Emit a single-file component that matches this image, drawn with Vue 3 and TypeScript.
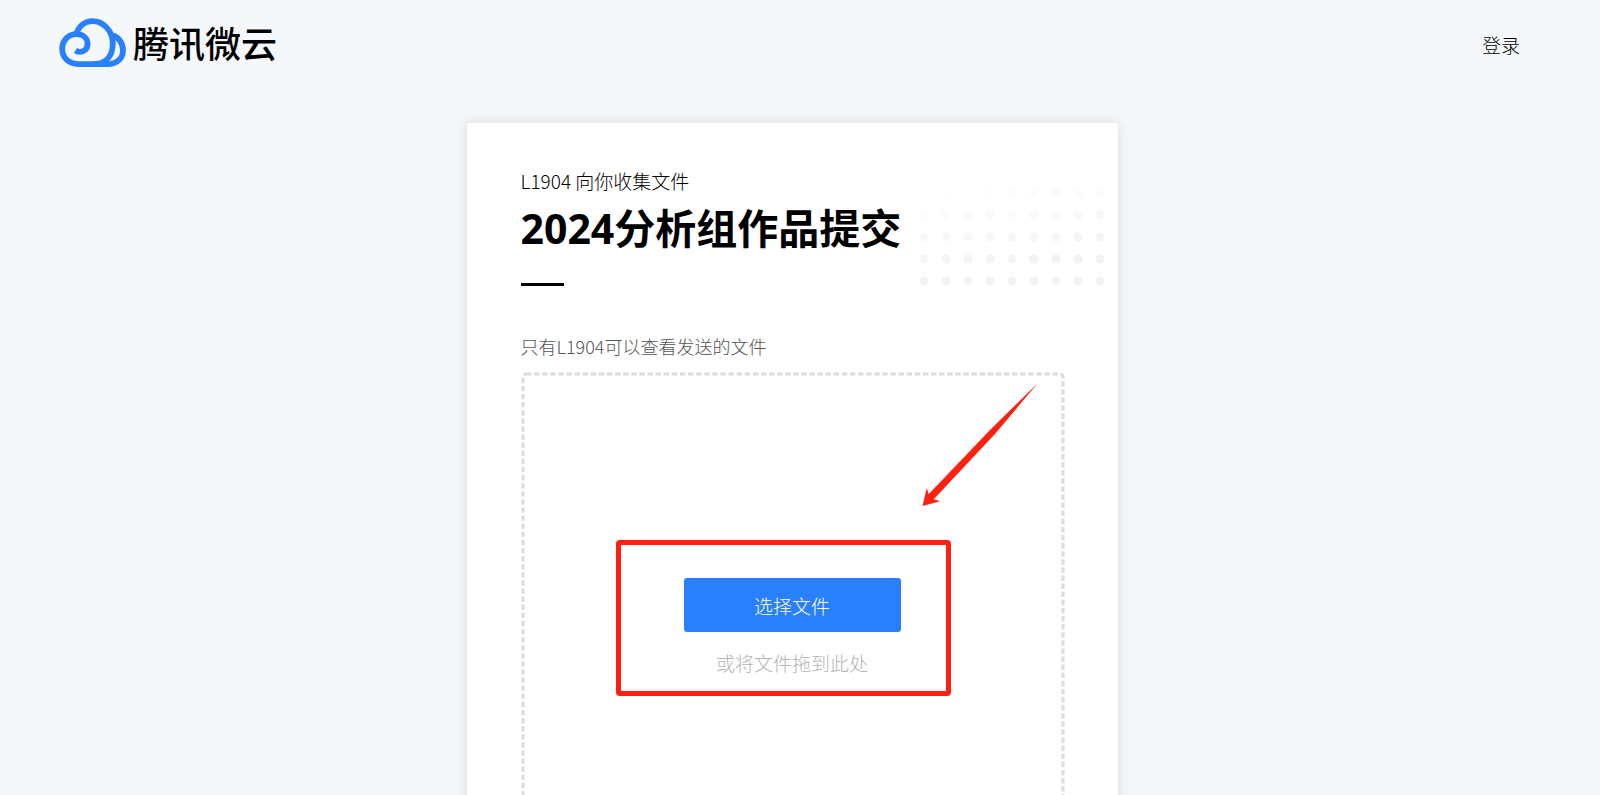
<script setup lang="ts">
interface Dot {
  x: number
  y: number
  opacity: number
}

const dots: Dot[] = []
for (let row = 0; row < 5; row++) {
  for (let col = 0; col < 9; col++) {
    const strength = 0.03 + row * 0.24 + col * 0.045
    dots.push({ x: 5 + col * 22, y: 5 + row * 22, opacity: Math.min(1, strength) })
  }
}
</script>

<template>
  <div class="page">
    <header class="header">
      <a class="brand" href="#">
        <svg class="cloud" viewBox="0 0 68 50" aria-hidden="true">
          <g fill="none" stroke="#2980ff" stroke-width="5.8">
            <path d="M17 17.500C19 8.500 25.500 3.100 33.500 3.100C44.500 3.100 53.800 13 53.800 25.500C53.800 36.500 48.500 46.200 34 46.200" />
            <path d="M16.500 32.500C21 35.500 28.600 33.500 28.600 26C28.600 20 24 16.200 17.500 16.200C9.500 16.200 3.200 22.500 3.200 30.800C3.200 39.800 9.500 46.200 21 46.200H48.500C58 46.200 64 40 64 32.500C64 25.500 60 19.500 54 17.500" />
          </g>
        </svg>
        <span class="brand-name">腾讯微云</span>
      </a>
      <a class="login" href="#">登录</a>
    </header>

    <div class="content">
      <main class="card">
        <svg class="dots" viewBox="0 0 186 98" aria-hidden="true">
          <circle v-for="(d, i) in dots" :key="i" :cx="d.x" :cy="d.y" r="4.500" fill="#f3f3f3" :opacity="d.opacity" />
        </svg>
        <p class="owner">L1904 向你收集文件</p>
        <h1 class="title">2024分析组作品提交</h1>
        <div class="rule"></div>
        <p class="notice">只有L1904可以查看发送的文件</p>

        <section class="dropzone">
          <svg class="outline" aria-hidden="true">
            <rect width="100%" height="100%" rx="3" />
          </svg>
          <button class="pick" type="button">选择文件</button>
          <p class="hint">或将文件拖到此处</p>
          <div class="highlight"></div>
          <svg class="arrow" viewBox="0 0 120 128" aria-hidden="true">
            <path fill="#ff2010" d="M1.500 126L5.700 108.300L7.800 114L70 49L117 3L74 54L12.700 119.300L19 121.300Z" />
          </svg>
        </section>
      </main>
    </div>
  </div>
</template>

<style>
body {
  margin: 0;
}
</style>

<style scoped>
.page {
  height: 100vh;
  overflow: hidden;
  box-sizing: border-box;
  background: #f4f6f8;
  color: #000;
  font-family: "Noto Sans CJK SC", sans-serif;
  font-weight: 300;
}

.header {
  display: flex;
  align-items: center;
  justify-content: space-between;
  height: 86px;
  box-sizing: border-box;
  padding: 0 80px 0 59px;
  background: #f4f8fb;
}

a {
  color: inherit;
  text-decoration: none;
}

.brand {
  display: flex;
  align-items: center;
  gap: 6px;
}

.cloud {
  width: 68px;
  height: 50px;
}

.brand-name {
  font-size: 36px;
  font-weight: 500;
  line-height: 50px;
  padding-bottom: 2px;
}

.login {
  font-size: 19px;
  line-height: 26px;
  margin-top: 4px;
}

.content {
  padding: 37px 16px 0 0;
}

.card {
  position: relative;
  box-sizing: border-box;
  width: 651px;
  max-width: 100%;
  margin: 0 auto;
  padding: 45px 54px 54px;
  background: #fff;
  border-radius: 3px;
  box-shadow: 0 0 12px rgba(0, 0, 0, 0.12);
}

.dots {
  position: absolute;
  top: 65px;
  right: 13px;
  width: 186px;
  height: 98px;
}

p,
h1 {
  margin: 0;
}

.owner {
  font-size: 19px;
  line-height: 26px;
}

.title {
  margin-top: 6px;
  font-family: "Open Sans", "Noto Sans CJK SC", sans-serif;
  font-size: 41px;
  font-weight: 700;
  line-height: 56px;
}

.rule {
  width: 43px;
  height: 3px;
  margin-top: 27px;
  background: #000;
}

.notice {
  margin-top: 47px;
  font-size: 18px;
  line-height: 26px;
  color: #555;
}

.dropzone {
  position: relative;
  display: flex;
  flex-direction: column;
  align-items: center;
  box-sizing: border-box;
  min-height: 508px;
  margin-top: 13px;
  padding-top: 206px;
}

.outline {
  position: absolute;
  inset: 2px;
  width: calc(100% - 3px);
  height: calc(100% - 3px);
  overflow: visible;
}

.outline rect {
  fill: none;
  stroke: #dcdcdc;
  stroke-width: 3px;
  stroke-dasharray: 5.4 2.7;
}

.pick {
  width: 217px;
  height: 54px;
  padding: 0;
  border: 0;
  border-radius: 3px;
  background: #2980ff;
  color: #fff;
  font-family: inherit;
  font-size: 19px;
  font-weight: inherit;
}

.hint {
  margin-top: 18px;
  font-size: 19px;
  line-height: 26px;
  color: #b4b4b4;
}

.highlight {
  position: absolute;
  top: 168px;
  left: 95px;
  width: 335px;
  height: 156px;
  box-sizing: border-box;
  border: 5px solid #ff2010;
  border-radius: 4px;
}

.arrow {
  position: absolute;
  top: 8px;
  left: 400px;
  width: 120px;
  height: 128px;
}
</style>
